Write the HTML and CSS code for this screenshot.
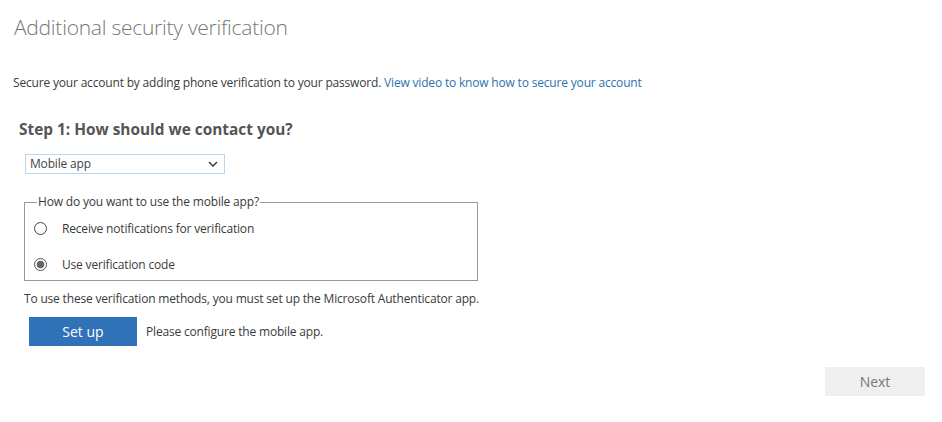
FILE: index.html
```html
<!DOCTYPE html>
<html lang="en">
<head>
<meta charset="utf-8">
<title>Additional security verification</title>
<link rel="stylesheet" href="styles.css">
</head>
<body>
<main class="page">
  <h1 class="title">Additional security verification</h1>
  <p class="intro">Secure your account by adding phone verification to your password. <a href="#" class="link">View video to know how to secure your account</a></p>
  <h2 class="step">Step 1: How should we contact you?</h2>
  <div class="select">
    <span class="select-value">Mobile app</span>
    <svg class="chev" width="10" height="6" viewBox="0 0 10 6"><path d="M1 1l4 4 4-4" fill="none" stroke="#444" stroke-width="1.6"/></svg>
  </div>
  <fieldset class="methods">
    <legend class="legend">How do you want to use the mobile app?</legend>
    <label class="option"><input type="radio" name="m" class="radio"><span>Receive notifications for verification</span></label>
    <label class="option"><input type="radio" name="m" class="radio" checked><span>Use verification code</span></label>
  </fieldset>
  <p class="note">To use these verification methods, you must set up the Microsoft Authenticator app.</p>
  <div class="setup-row">
    <button class="btn-primary">Set up</button>
    <span class="setup-msg">Please configure the mobile app.</span>
  </div>
  <div class="actions">
    <button class="btn-next">Next</button>
  </div>
</main>
</body>
</html>
```
FILE: styles.css
```css
html, body {
  margin: 0;
  padding: 0;
  background: #fff;
}
body {
  font-family: "Segoe UI", "Open Sans", "Liberation Sans", sans-serif;
  font-size: 12px;
  letter-spacing: -0.18px;
  color: #3a3a3a;
}
.page {
  padding: 11px 17px 0 13px;
}
.title {
  margin: 0 0 31px 1px;
  font-size: 21px;
  letter-spacing: -0.25px;
  line-height: 32px;
  font-weight: 300;
  color: #777;
}
.intro {
  margin: 0;
  line-height: 18px;
}
.link {
  color: #2e72ad;
  text-decoration: none;
}
.step {
  margin: 28px 0 0 6px;
  font-size: 15.4px;
  letter-spacing: 0;
  line-height: 20px;
  font-weight: 700;
  color: #555;
}
.select {
  margin: 14px 0 0 12px;
  height: 18px;
  border: 1px solid #bcd8ee;
  display: flex;
  align-items: center;
  justify-content: space-between;
  padding: 0 6px 0 4px;
  box-sizing: content-box;
  width: 188px;
}
.select-value {
  color: #444;
  line-height: 18px;
}
.chev {
  display: block;
}
.methods {
  margin: 19px 0 0 11px;
  width: 454px;
  box-sizing: border-box;
  border: 1px solid #999;
  padding: 8px 0 7px 9px;
  min-width: 0;
}
.legend {
  padding: 0 1px;
  margin-left: 3px;
  line-height: 18px;
}
.option {
  display: flex;
  align-items: center;
  height: 18px;
}
.option + .option {
  margin-top: 18px;
}
.radio {
  appearance: none;
  -webkit-appearance: none;
  margin: 0 15px 0 0;
  width: 13px;
  height: 13px;
  border: 1px solid #444;
  border-radius: 50%;
  background: #fff;
  box-sizing: border-box;
}
.radio:checked {
  border-color: #555;
  background: radial-gradient(circle, #666 0 3.5px, #fff 4.2px);
}
.note {
  margin: 9px 0 0 11px;
  line-height: 18px;
}
.setup-row {
  margin: 9px 0 0 16px;
  display: flex;
  align-items: center;
  gap: 9px;
}
.btn-primary {
  width: 108px;
  height: 29px;
  border: 0;
  background: #2f72b8;
  color: #fff;
  font-family: inherit;
  font-size: 14px;
  padding: 0;
}
.actions {
  margin-top: 21px;
  display: flex;
  justify-content: flex-end;
}
.btn-next {
  width: 100px;
  height: 29px;
  border: 0;
  background: #efefef;
  color: #777;
  font-family: inherit;
  font-size: 14px;
  padding: 0;
}
```
